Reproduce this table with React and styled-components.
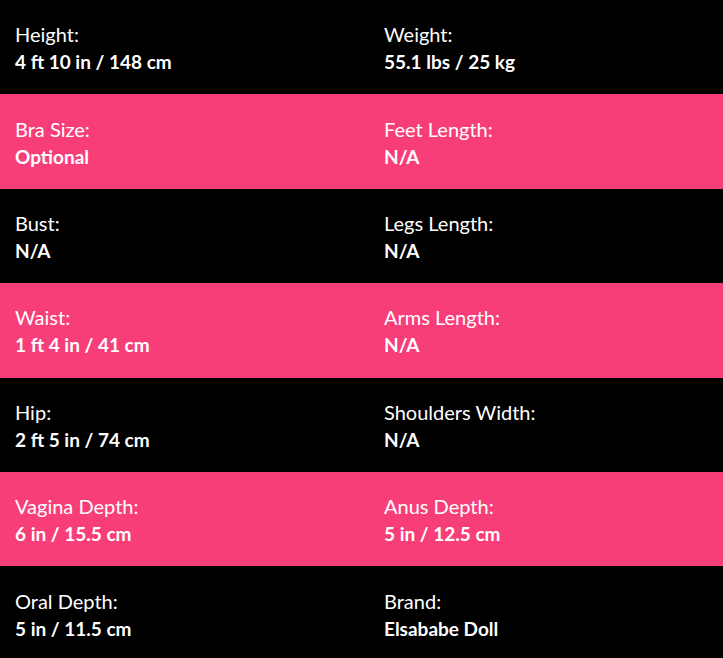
import React from 'react';
import styled, { createGlobalStyle } from 'styled-components';

const rows = [
  [['Height:', '4 ft 10 in / 148 cm'], ['Weight:', '55.1 lbs / 25 kg']],
  [['Bra Size:', 'Optional'], ['Feet Length:', 'N/A']],
  [['Bust:', 'N/A'], ['Legs Length:', 'N/A']],
  [['Waist:', '1 ft 4 in / 41 cm'], ['Arms Length:', 'N/A']],
  [['Hip:', '2 ft 5 in / 74 cm'], ['Shoulders Width:', 'N/A']],
  [['Vagina Depth:', '6 in / 15.5 cm'], ['Anus Depth:', '5 in / 12.5 cm']],
  [['Oral Depth:', '5 in / 11.5 cm'], ['Brand:', 'Elsababe Doll']],
];

const Global = createGlobalStyle`
  html, body {
    margin: 0;
    padding: 0;
    background: #000;
  }
  body {
    font-family: Lato, "Open Sans", sans-serif;
    color: #fff;
  }
`;

const Table = styled.div`
  width: 723px;
  display: flex;
  flex-direction: column;
`;

const Row = styled.div`
  display: grid;
  grid-template-columns: 369px 1fr;
  height: 94.4px;
  align-items: center;
  background: ${p => (p.$pink ? '#f83e78' : '#000')};
`;

const Cell = styled.div`
  padding-left: 15px;
  padding-top: 2px;
  display: flex;
  flex-direction: column;
`;

const Label = styled.span`
  font-size: 20px;
  line-height: 27px;
  font-weight: 400;
`;

const Value = styled.span`
  font-size: 19px;
  line-height: 27px;
  font-weight: 700;
`;

export default function App() {
  return (
    <>
      <Global />
      <Table>
        {rows.map((row, i) => (
          <Row key={i} $pink={i % 2 === 1}>
            {row.map(([label, value]) => (
              <Cell key={label}>
                <Label>{label}</Label>
                <Value>{value}</Value>
              </Cell>
            ))}
          </Row>
        ))}
      </Table>
    </>
  );
}
